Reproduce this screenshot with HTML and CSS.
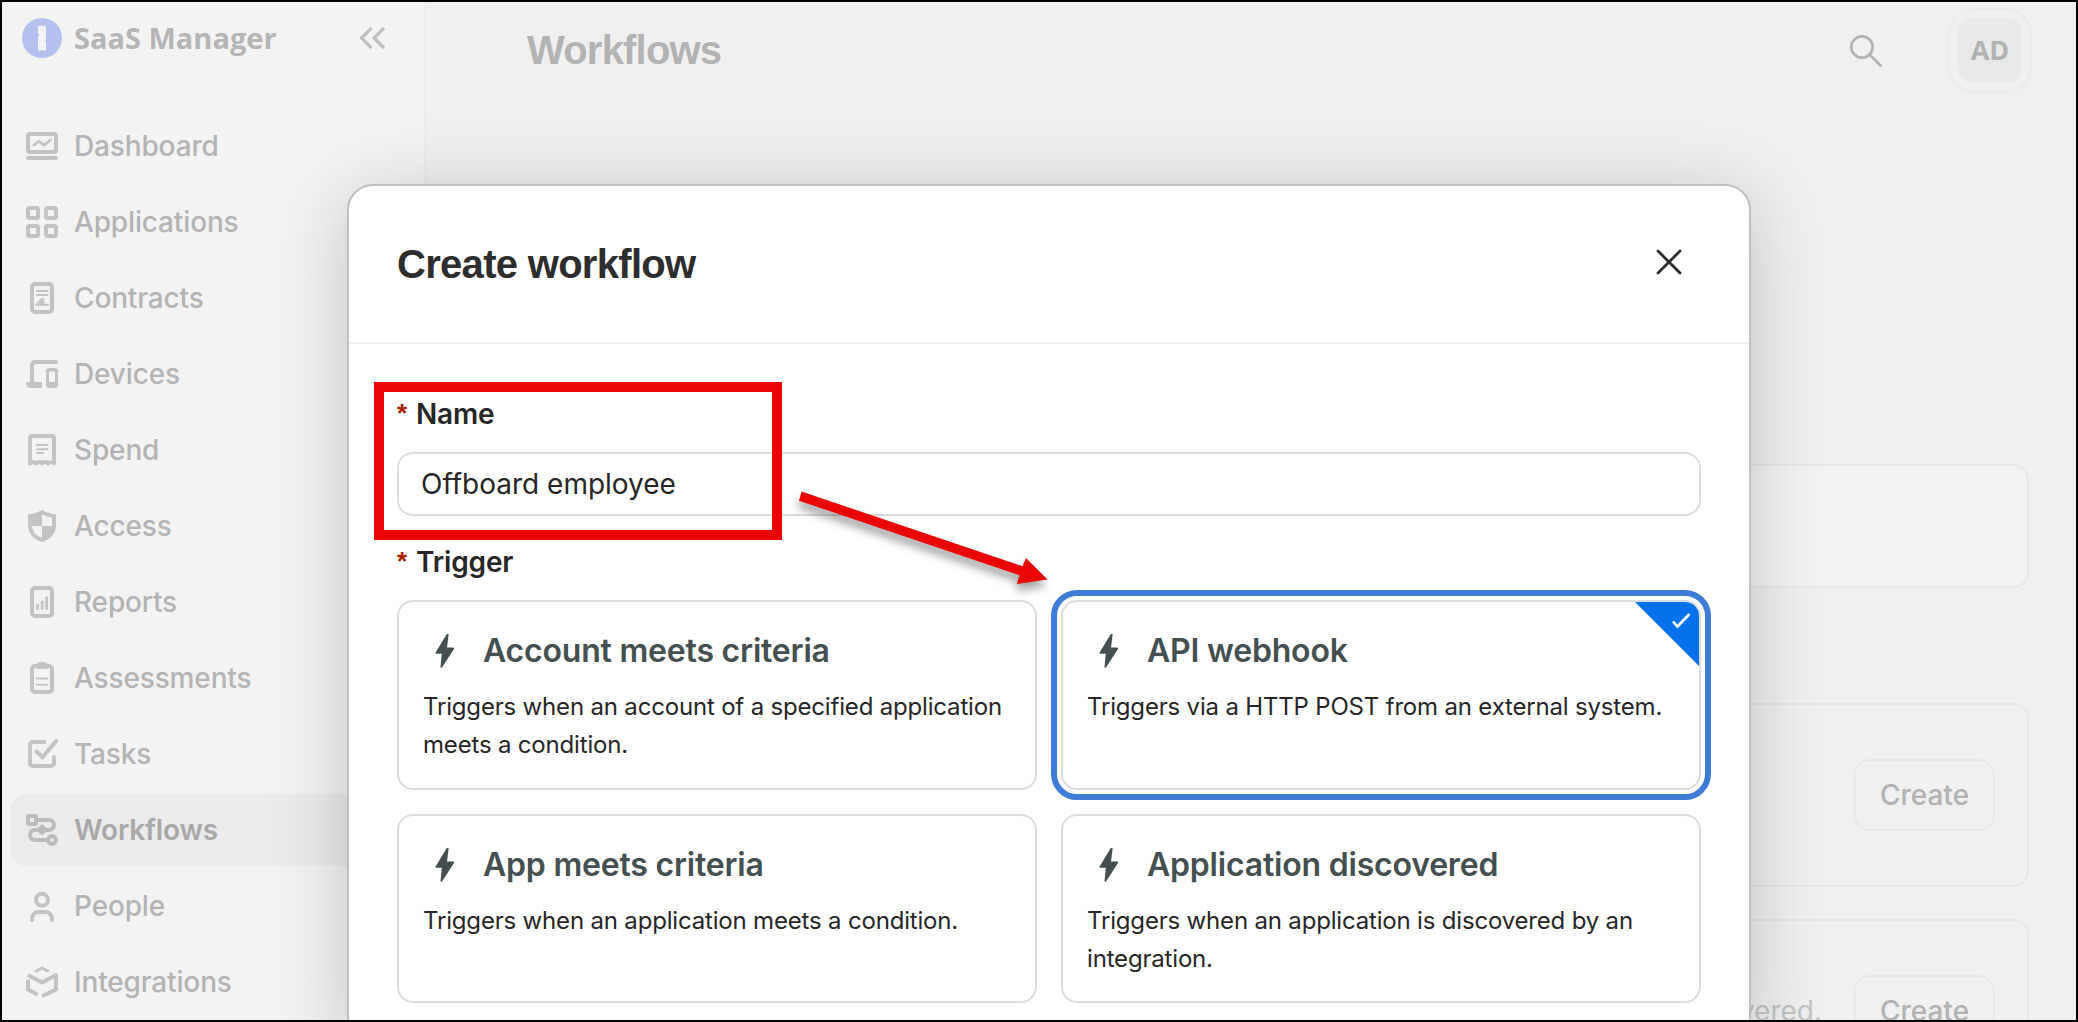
FILE: index.html
```
<!DOCTYPE html>
<html lang="en">
<head>
<meta charset="utf-8">
<title>Workflows - SaaS Manager</title>
<link rel="stylesheet" href="styles.css">
</head>
<body>
<div class="app">
  <aside class="sidebar">
    <div class="brand">
      <svg class="brand-logo" viewBox="0 0 40 40"><circle cx="20" cy="20" r="20" fill="#b4c1ee"/><path d="M17 7.8h6a1 1 0 0 1 1 1v12l-1.3 1.4 1.3 1.4v8a1 1 0 0 1-1 1h-6a1 1 0 0 1-1-1V18.400l1.400-1.400-1.400-1.400V8.800a1 1 0 0 1 1-1z" fill="#f3f3f3"/></svg>
      <span class="brand-name">SaaS Manager</span>
      <svg class="collapse" viewBox="0 0 28 24"><path d="M12.500 2 2.500 12l10 10M25 2 15 12l10 10"/></svg>
    </div>
    <nav class="nav">
      <a class="nav-item"><svg class="icon" viewBox="0 0 32 32"><rect x="2" y="4" width="28" height="18" rx="2"/><path d="M2 28h28"/><path class="thin" d="m8 15 4.500-3.800 5.500 4L24.500 10"/></svg>Dashboard</a>
      <a class="nav-item"><svg class="icon" viewBox="0 0 32 32"><rect x="2" y="2" width="10" height="10" rx="1.500"/><rect x="20" y="2" width="10" height="10" rx="1.500"/><rect x="2" y="20" width="10" height="10" rx="1.500"/><rect x="20" y="20" width="10" height="10" rx="1.500"/></svg>Applications</a>
      <a class="nav-item"><svg class="icon" viewBox="0 0 32 32"><rect x="6" y="2" width="20" height="28" rx="3"/><path class="fine" d="M11 9h10.500M11 13h10.500M10 22.800h12M11.500 20.500c3.500.3 6.500-1.500 6-3-.6-1.400-3.300-.4-3.800 2-.4 2.300 2.300 2.500 4.300.8"/></svg>Contracts</a>
      <a class="nav-item"><svg class="icon" viewBox="0 0 32 32"><path d="M30 4H9a3 3 0 0 0-3 3v19"/><path class="solid" d="M1.500 24H16v6H4.500A4.500 4.500 0 0 1 0 25.500 1.500 1.500 0 0 1 1.500 24zM23 10h6a3 3 0 0 1 3 3v14a3 3 0 0 1-3 3h-6a3 3 0 0 1-3-3V13a3 3 0 0 1 3-3zm1 3.500a1 1 0 0 0-1 1V24h6v-9.500a1 1 0 0 0-1-1z"/></svg>Devices</a>
      <a class="nav-item"><svg class="icon" viewBox="0 0 32 32"><path d="M4 29.500V4a2 2 0 0 1 2-2h20a2 2 0 0 1 2 2v25.500c-2-2-4.500-1.500-6 0-1.800-2-4.300-2-6 0-1.700-2-4.200-2-6 0-1.500-1.500-4-2-6 0z"/><path class="fine" d="M11 11h10.500M11 15.200h10.500M11 19h6"/></svg>Spend</a>
      <a class="nav-item"><svg class="icon" viewBox="0 0 32 32"><path class="solid" fill-rule="evenodd" d="M16 0c4.500 2.500 9 4 14 4.500V15c0 8.500-5.500 14.500-14 17C7.500 29.500 2 23.500 2 15V4.500C7 4 11.500 2.500 16 0zm0 4.500V16h10V7.500c-3.500-.5-6.500-1.500-10-3zM6 16c.4 5.500 4 9.800 10 11.800V16z"/></svg>Access</a>
      <a class="nav-item"><svg class="icon" viewBox="0 0 32 32"><rect x="6" y="2" width="20" height="28" rx="3"/><path class="bars" d="M11.500 19.500v3M16.200 16v6.500M20.700 12v10.500"/></svg>Reports</a>
      <a class="nav-item"><svg class="icon" viewBox="0 0 32 32"><rect x="6" y="4" width="20" height="26" rx="3"/><path class="solid" d="M13.500 0h5a1.500 1.500 0 0 1 1.500 1.500h1.500a1 1 0 0 1 1 1V5a2 2 0 0 1-2 2h-9a2 2 0 0 1-2-2V2.500a1 1 0 0 1 1-1H12A1.500 1.500 0 0 1 13.500 0z"/><path class="fine" d="M11 16.500h10.500M11 22.800h10.500"/></svg>Assessments</a>
      <a class="nav-item"><svg class="icon" viewBox="0 0 32 32"><path d="M18.500 4H7a3 3 0 0 0-3 3v18a3 3 0 0 0 3 3h18a3 3 0 0 0 3-3v-6"/><path d="m10.500 13.500 6 5.800L30.300 2.800"/></svg>Tasks</a>
      <a class="nav-item active"><svg class="icon" viewBox="0 0 32 32"><rect x="2" y="2" width="8" height="8" rx="1"/><path d="M12 6h11a5 5 0 0 1 0 10H9a5 5 0 0 0 0 10h11"/><circle cx="26" cy="26" r="4"/><path class="solid" d="m16 10 6.500 5.800-6.500 5.800-6.500-5.800z"/></svg>Workflows</a>
      <a class="nav-item"><svg class="icon" viewBox="0 0 32 32"><circle cx="16" cy="9.800" r="6"/><path d="M6 30v-1.500A6.500 6.500 0 0 1 12.500 22h7a6.500 6.500 0 0 1 6.500 6.500V30"/></svg>People</a>
      <a class="nav-item"><svg class="icon" viewBox="0 0 32 32"><path class="solid" d="M7.500 5 16 .2 24.500 5 21 6.600l-5-2.800-5 2.800z"/><path d="m2 9 14 7.600L30 9v14.500l-14 6.800M2 13.500v10l9.500 5" stroke-linejoin="round" stroke-linecap="butt"/></svg>Integrations</a>
    </nav>
  </aside>

  <main class="main">
    <header class="topbar">
      <h1 class="page-title">Workflows</h1>
      <svg class="search" viewBox="0 0 32 32"><circle cx="12" cy="12" r="10.700"/><path d="m19.500 19.500 11 11"/></svg>
      <div class="avatar-ring"><div class="avatar">AD</div></div>
    </header>
    <section class="list">
      <div class="panel filter"></div>
      <div class="panel row"><button class="create">Create</button></div>
      <div class="panel row"><span class="row-text">vered.</span><button class="create">Create</button></div>
    </section>
  </main>

  <div class="modal">
    <header class="modal-head">
      <h2 class="modal-title">Create workflow</h2>
      <svg class="close" viewBox="0 0 26 26"><path d="m2 2 22 22M24 2 2 24"/></svg>
    </header>
    <div class="modal-body">
      <div class="label"><span class="star">*</span>Name</div>
      <div class="input">Offboard employee</div>
      <div class="label trigger-label"><span class="star">*</span>Trigger</div>
      <div class="cards">
        <article class="card">
          <h3 class="card-title"><svg class="bolt" viewBox="0 0 20 34"><path d="M11.800 0 .6 18.600c-.4.700 0 1.200.7 1.200h5.500L5.500 33c0 .9 1 1.100 1.500.4l12-18.500c.4-.7 0-1.300-.7-1.300H12L13.600.8c.1-1-1.200-1.500-1.800-.8z"/></svg>Account meets criteria</h3>
          <p class="card-text">Triggers when an account of a specified application meets a condition.</p>
        </article>
        <article class="card selected">
          <h3 class="card-title"><svg class="bolt" viewBox="0 0 20 34"><path d="M11.800 0 .6 18.600c-.4.700 0 1.200.7 1.200h5.500L5.500 33c0 .9 1 1.100 1.500.4l12-18.500c.4-.7 0-1.300-.7-1.300H12L13.600.8c.1-1-1.200-1.500-1.800-.8z"/></svg>API webhook</h3>
          <p class="card-text">Triggers via a HTTP POST from an external system.</p>
          <svg class="corner" viewBox="0 0 64 64"><path d="M0 0h50a14 14 0 0 1 14 14v50z" fill="#0572ec"/><path d="m38 19.500 4.500 5L54.500 12" fill="none" stroke="#fff" stroke-width="2.600"/></svg>
        </article>
        <article class="card">
          <h3 class="card-title"><svg class="bolt" viewBox="0 0 20 34"><path d="M11.800 0 .6 18.600c-.4.700 0 1.200.7 1.200h5.500L5.500 33c0 .9 1 1.100 1.500.4l12-18.500c.4-.7 0-1.300-.7-1.300H12L13.600.8c.1-1-1.200-1.500-1.800-.8z"/></svg>App meets criteria</h3>
          <p class="card-text">Triggers when an application meets a condition.</p>
        </article>
        <article class="card">
          <h3 class="card-title"><svg class="bolt" viewBox="0 0 20 34"><path d="M11.800 0 .6 18.600c-.4.700 0 1.200.7 1.200h5.500L5.500 33c0 .9 1 1.100 1.500.4l12-18.500c.4-.7 0-1.300-.7-1.300H12L13.600.8c.1-1-1.200-1.500-1.800-.8z"/></svg>Application discovered</h3>
          <p class="card-text">Triggers when an application is discovered by an integration.</p>
        </article>
      </div>
    </div>
  </div>

  <div class="highlight-box"></div>
  <svg class="arrow" viewBox="0 0 270 120"><path d="M11.500 11.500 9 20.700 229.500 95.300 227 104 257.500 99.500 236 78 232.500 86.300z"/></svg>
</div>
</body>
</html>
```
FILE: styles.css
```
* { box-sizing: border-box; }

body {
  margin: 0;
  font-family: Inter, "Liberation Sans", sans-serif;
}

h1, h2, h3, p { margin: 0; }

.app {
  position: relative;
  display: flex;
  width: 2078px;
  height: 1022px;
  border: 2px solid #000;
  background: #f0f0f0;
  overflow: hidden;
}

/* Sidebar */
.sidebar {
  flex: none;
  width: 424px;
  padding: 16px 8px 0;
  background: #f3f3f3;
  border-right: 2px solid #ededed;
}

.brand {
  display: flex;
  align-items: center;
  height: 40px;
  padding: 0 29px 0 12px;
}

.brand-logo { flex: none; width: 40px; height: 40px; }

.brand-name {
  flex: 1;
  margin-left: 12px;
  font: 700 29px/38px "Open Sans", sans-serif;
  color: #b5b5b5;
}

.collapse {
  width: 28px;
  height: 24px;
  fill: none;
  stroke: #c0c0c0;
  stroke-width: 3.2;
}

.nav {
  display: flex;
  flex-direction: column;
  gap: 4px;
  margin-top: 52px;
}

.nav-item {
  display: flex;
  align-items: center;
  gap: 16px;
  height: 72px;
  padding-left: 16px;
  border-radius: 16px;
  font-size: 28px;
  font-weight: 500;
  letter-spacing: -0.15px;
  color: #b4b4b4;
}

.nav-item.active {
  background: #ebebeb;
  font-weight: 600;
  color: #a8a8a8;
}

.icon {
  flex: none;
  width: 32px;
  height: 32px;
  fill: none;
  stroke: #c3c3c3;
  stroke-width: 4;
  stroke-linecap: round;
  stroke-linejoin: round;
}

.active .icon { stroke: #bcbcbc; }
.icon .thin { stroke-width: 2.8; }
.icon .fine { stroke-width: 2; }
.icon .bars { stroke-width: 2.8; }
.icon .solid { fill: #c3c3c3; stroke: none; }
.active .icon .solid { fill: #bcbcbc; }

/* Page behind the dialog */
.main { flex: 1; }

.topbar {
  display: flex;
  align-items: center;
  height: 84px;
  margin-top: 6px;
  padding: 0 44px 0 101px;
}

.page-title {
  flex: 1;
  font: 700 40px/48px "Liberation Sans", Arial, sans-serif;
  letter-spacing: -0.8px;
  color: #b3b3b3;
}

.search {
  width: 32px;
  height: 32px;
  margin: 2px 66px 0 0;
  fill: none;
  stroke: #b3b3b3;
  stroke-width: 2.700;
  stroke-linecap: round;
}

.avatar-ring {
  width: 84px;
  height: 84px;
  padding: 8px;
  border: 2px solid #ebebeb;
  border-radius: 26px;
  box-shadow: 0 4px 10px rgba(0, 0, 0, 0.015);
}

.avatar {
  width: 64px;
  height: 64px;
  border-radius: 14px;
  background: #e7eae9;
  font: 700 27px/64px "Open Sans", sans-serif;
  text-align: center;
  color: #b1b3b2;
}

.list {
  display: flex;
  flex-direction: column;
  padding: 372px 47px 0 100px;
}

.panel {
  border: 2px solid #e8e8e8;
  border-radius: 16px;
}

.filter {
  height: 124px;
  margin-bottom: 115px;
  background: #f3f3f3;
}

.row {
  display: flex;
  align-items: center;
  justify-content: flex-end;
  gap: 32px;
  height: 184px;
  margin-bottom: 32px;
  padding-right: 32px;
}

.row-text { font-size: 28px; color: #c1c5c5; }

.create {
  width: 141px;
  height: 72px;
  padding: 0;
  border: 2px solid #e8e8e8;
  border-radius: 16px;
  background: transparent;
  font: 500 28px/1 Inter, sans-serif;
  color: #b2b2b2;
}

/* Dialog */
.modal {
  position: absolute;
  left: 345px;
  top: 182px;
  width: 1404px;
  height: 860px;
  border: 2px solid #c0c0c0;
  border-radius: 26px 26px 0 0;
  background: #fff;
  box-shadow: 0 12px 80px rgba(0, 0, 0, 0.2);
}

.modal-head {
  display: flex;
  align-items: center;
  justify-content: space-between;
  height: 158px;
  padding: 0 67px 0 48px;
  border-bottom: 2px solid #f0f0f0;
}

.modal-title {
  font: 700 40px/48px "Liberation Sans", Arial, sans-serif;
  letter-spacing: -0.7px;
  color: #2d2d2d;
}

.close {
  width: 26px;
  height: 26px;
  margin-top: -4px;
  fill: none;
  stroke: #2b2b2b;
  stroke-width: 2.800;
  stroke-linecap: round;
}

.modal-body { padding: 52px 48px 0; }

.label {
  display: flex;
  height: 36px;
  font-size: 28px;
  font-weight: 600;
  line-height: 36px;
  letter-spacing: -0.15px;
  color: #262626;
}

.star {
  width: 19px;
  font: 700 26px/35px "Liberation Sans", Arial, sans-serif;
  color: #a82000;
}

.input {
  height: 64px;
  margin-top: 20px;
  padding-left: 22px;
  border: 2px solid #dcdcdc;
  border-radius: 16px;
  font-size: 28px;
  line-height: 60px;
  color: #262626;
}

.trigger-label { margin-top: 28px; }

.cards {
  display: grid;
  grid-template-columns: 1fr 1fr;
  grid-template-rows: 190px 189px;
  gap: 24px;
  margin-top: 20px;
}

.card {
  position: relative;
  padding: 28px 24px 0;
  border: 2px solid #dcdcdc;
  border-radius: 16px;
}

.card.selected {
  outline: 6px solid #3f7cd6;
  outline-offset: 4px;
}

.card-title {
  display: flex;
  align-items: center;
  gap: 28px;
  height: 40px;
  padding-left: 12px;
  font-size: 32px;
  font-weight: 600;
  letter-spacing: -0.2px;
  color: #43504f;
}

.bolt { width: 20px; height: 34px; margin-top: 2px; fill: #43504f; }

.card-text {
  margin-top: 18px;
  font-size: 24px;
  line-height: 38px;
  letter-spacing: -0.18px;
  color: #262626;
}

.corner {
  position: absolute;
  top: 0;
  right: 0;
  width: 64px;
  height: 64px;
}

/* Annotations drawn over the page */
.highlight-box {
  position: absolute;
  left: 372px;
  top: 380px;
  width: 408px;
  height: 158px;
  border: 10px solid #eb0606;
}

.arrow {
  position: absolute;
  left: 788px;
  top: 478px;
  width: 270px;
  height: 120px;
  overflow: visible;
  fill: #eb0606;
  filter: drop-shadow(-1px 7px 4px rgba(0, 0, 0, 0.35));
}
```
